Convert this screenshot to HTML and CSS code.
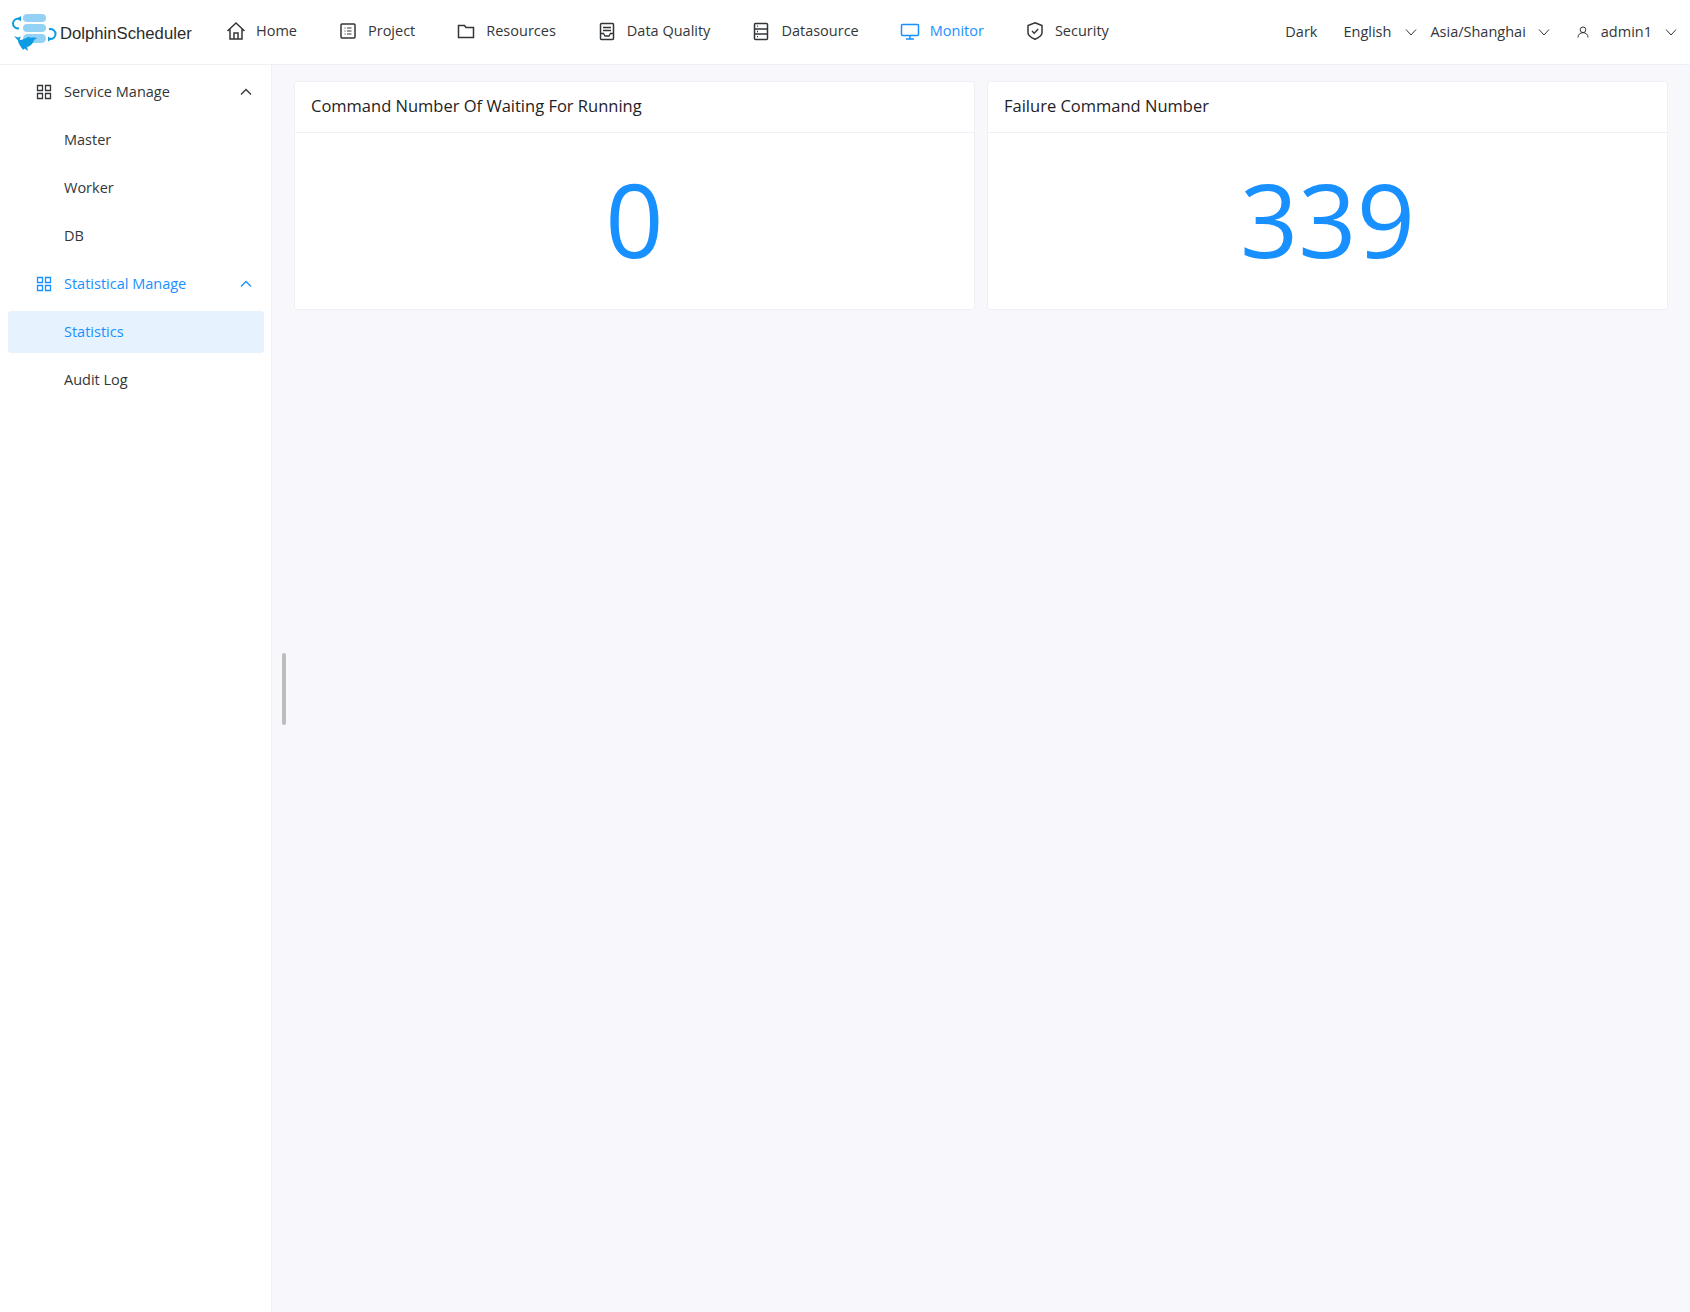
FILE: index.html
```html
<!DOCTYPE html>
<html lang="en">
<head>
<meta charset="utf-8">
<title>DolphinScheduler</title>
<link rel="stylesheet" href="styles.css">
</head>
<body>
<header class="topbar">
  <div class="logo">
    <svg class="logo-mark" width="60" height="64" viewBox="0 0 60 64">
      <rect x="23" y="14" width="23" height="8" rx="4" fill="#93d2f4"/>
      <rect x="23" y="24" width="23" height="8" rx="4" fill="#93d2f4"/>
      <rect x="23" y="34" width="23" height="9" rx="4.5" fill="#93d2f4"/>
      <path d="M20 18.5 C15 18 13 21 13 23.5 C13 26 15 28.5 19 28.5" fill="none" stroke="#0d9be3" stroke-width="2"/>
      <path d="M21 16 L17 18.700 L21 21.200 Z" fill="#0d9be3"/>
      <path d="M49 29 C53 28.500 55.500 31 55.500 34 C55.500 37 53 39 50 39" fill="none" stroke="#0d9be3" stroke-width="2"/>
      <path d="M48 36.500 L52 39 L48 41.500 Z" fill="#0d9be3"/>
      <path d="M14 36 L18 37.500 L21 36.500 L19.500 39.500 C21 40.500 23 39.500 26 38 L29 36.500 L29.500 37.800 C32 37.500 34 37.500 37 38 L34 40 C33 44 30 46.500 27 47 L28 51 L24.500 48.500 L23 50 C21 47 18 43 18 40.500 Z" fill="#0d9be3"/>
    </svg>
    <span class="logo-text">DolphinScheduler</span>
  </div>
  <nav class="menu">
    <a class="menu-item"><svg class="icon" viewBox="0 0 20 20"><path d="M1.500 10 10 2l8.500 8M4 8v10h12V8M8 18v-6h4v6" fill="none" stroke="#333639" stroke-width="1.500"/></svg><span>Home</span></a>
    <a class="menu-item"><svg class="icon" viewBox="0 0 20 20"><rect x="3" y="3" width="14" height="14" rx="1" fill="none" stroke="#333639" stroke-width="1.500"/><path d="M6.500 7h1M6.500 10h1M6.500 13h1M9 7h4.500M9 10h4.500M9 13h4.500" stroke="#333639" stroke-width="1.200"/></svg><span>Project</span></a>
    <a class="menu-item"><svg class="icon" viewBox="0 0 20 20"><path d="M2.500 4.500h6l1.500 2h7.500v10h-15z" fill="none" stroke="#333639" stroke-width="1.500"/></svg><span>Resources</span></a>
    <a class="menu-item"><svg class="icon" viewBox="0 0 20 20"><rect x="3.500" y="2.500" width="13" height="16" rx="1" fill="none" stroke="#333639" stroke-width="1.500"/><path d="M6 6.500h8M6 9.500h8M3.500 12.500h3l1.500 2.500h4l1.500-2.500h3" fill="none" stroke="#333639" stroke-width="1.300"/></svg><span>Data Quality</span></a>
    <a class="menu-item"><svg class="icon" viewBox="0 0 20 20"><rect x="3.500" y="2.500" width="13" height="16" rx="1" fill="none" stroke="#333639" stroke-width="1.500"/><path d="M3.500 8h13M3.500 13h13M6 5.200h1M6 10.500h1M6 15.700h1" stroke="#333639" stroke-width="1.300"/></svg><span>Datasource</span></a>
    <a class="menu-item is-active"><svg class="icon" viewBox="0 0 20 20"><rect x="1.500" y="3.500" width="17" height="11" rx="1" fill="none" stroke="#1890ff" stroke-width="1.500"/><path d="M10 15v3M6 18h8" stroke="#1890ff" stroke-width="1.500"/></svg><span>Monitor</span></a>
    <a class="menu-item"><svg class="icon" viewBox="0 0 20 20"><path d="M10 1.800 17 4.500v7.200c0 2.800-3.500 5-7 6.600-3.500-1.600-7-3.800-7-6.600V4.500z" fill="none" stroke="#333639" stroke-width="1.500"/><path d="M7 10l2.200 2.200L13.200 8" fill="none" stroke="#333639" stroke-width="1.400"/></svg><span>Security</span></a>
  </nav>
  <div class="settings">
    <span class="set-dark">Dark</span>
    <span class="set-lang">English</span>
    <svg class="chev chev-lang" viewBox="0 0 12 12"><path d="M1 3.500 6 9l5-5.500" fill="none" stroke="#333639" stroke-width="1"/></svg>
    <span class="set-tz">Asia/Shanghai</span>
    <svg class="chev chev-tz" viewBox="0 0 12 12"><path d="M1 3.500 6 9l5-5.500" fill="none" stroke="#333639" stroke-width="1"/></svg>
    <svg class="user-icon" viewBox="0 0 12 12"><circle cx="6" cy="3.800" r="2.800" fill="none" stroke="#333639" stroke-width="1"/><path d="M1 11.500c0-3 2-4.800 5-4.800s5 1.800 5 4.800" fill="none" stroke="#333639" stroke-width="1"/></svg>
    <span class="set-user">admin1</span>
    <svg class="chev chev-user" viewBox="0 0 12 12"><path d="M1 3.500 6 9l5-5.500" fill="none" stroke="#333639" stroke-width="1"/></svg>
  </div>
</header>
<div class="body">
  <aside class="sidebar">
    <div class="side-row side-group">
      <svg class="grid-icon" viewBox="0 0 16 16"><path d="M1.500 1.500h5v5h-5zM9.500 1.500h5v5h-5zM1.500 9.500h5v5h-5zM9.500 9.500h5v5h-5z" fill="none" stroke="#333639" stroke-width="1.300"/></svg>
      <span class="side-label">Service Manage</span>
      <svg class="up" viewBox="0 0 12 12"><path d="M1 8.500 6 3.500l5 5" fill="none" stroke="#333639" stroke-width="1.300"/></svg>
    </div>
    <div class="side-row side-sub">Master</div>
    <div class="side-row side-sub">Worker</div>
    <div class="side-row side-sub">DB</div>
    <div class="side-row side-group is-open">
      <svg class="grid-icon" viewBox="0 0 16 16"><path d="M1.500 1.500h5v5h-5zM9.500 1.500h5v5h-5zM1.500 9.500h5v5h-5zM9.500 9.500h5v5h-5z" fill="none" stroke="#1890ff" stroke-width="1.300"/></svg>
      <span class="side-label">Statistical Manage</span>
      <svg class="up" viewBox="0 0 12 12"><path d="M1 8.500 6 3.500l5 5" fill="none" stroke="#1890ff" stroke-width="1.300"/></svg>
    </div>
    <div class="side-row side-sub is-selected">Statistics</div>
    <div class="side-row side-sub">Audit Log</div>
  </aside>
  <main class="content">
    <div class="scroll-thumb"></div>
    <section class="card">
      <h2 class="card-title">Command Number Of Waiting For Running</h2>
      <div class="card-value"><span class="digits">0</span></div>
    </section>
    <section class="card">
      <h2 class="card-title">Failure Command Number</h2>
      <div class="card-value"><span class="digits">339</span></div>
    </section>
  </main>
</div>
</body>
</html>
```
FILE: styles.css
```css
* { box-sizing: border-box; }
html, body { margin: 0; height: 100%; }
body {
  display: flex;
  flex-direction: column;
  height: 1312px;
  overflow: hidden;
  background: #fff;
  color: #333639;
  font-family: "Open Sans", "Noto Sans", sans-serif;
  font-size: 14.5px;
}
.topbar {
  display: flex;
  align-items: center;
  height: 65px;
  flex: none;
  border-bottom: 1px solid #efeff5;
  background: #fff;
}
.logo { display: flex; align-items: center; width: 226px; flex: none; }
.logo-mark { flex: none; display: block; }
.logo-text {
  font-family: "Liberation Sans", Arial, sans-serif;
  font-size: 16.7px;
  color: #2b2b2b;
  position: relative;
  top: 2px;
}
.menu { display: flex; gap: 41px; flex: none; height: 100%; align-items: center; position: relative; top: -2px; }
.menu-item { display: flex; align-items: center; gap: 10px; }
.menu-item .icon { position: relative; top: 1px; }
.menu-item.is-active { color: #1890ff; }
.icon { width: 20px; height: 20px; flex: none; }
.settings { margin-left: auto; display: flex; align-items: center; padding-right: 13px; position: relative; top: -1px; }
.set-dark { margin-right: 26px; }
.chev { width: 12px; height: 12px; flex: none; position: relative; top: 1px; }
.chev-lang { margin: 0 13px 0 14px; }
.chev-tz { margin: 0 27px 0 12px; }
.user-icon { width: 12px; height: 12px; margin-right: 12px; flex: none; position: relative; top: 1px; }
.chev-user { margin-left: 13px; }
.body { flex: 1; display: flex; min-height: 0; }
.sidebar {
  width: 272px;
  flex: none;
  background: #fff;
  border-right: 1px solid #efeff5;
  padding: 6px 0 0 8px;
}
.side-row {
  display: flex;
  align-items: center;
  width: 256px;
  height: 42px;
  margin-bottom: 6px;
  border-radius: 3px;
}
.side-group { padding: 0 12px 0 28px; }
.grid-icon { width: 16px; height: 16px; flex: none; margin-right: 12px; }
.side-label { flex: 1; padding-bottom: 2px; }
.up { width: 12px; height: 12px; flex: none; }
.side-sub { padding: 0 0 2px 56px; }
.is-open { color: #1890ff; }
.is-selected { background: #e6f3ff; color: #1890ff; }
.content {
  flex: 1;
  position: relative;
  display: flex;
  align-items: flex-start;
  gap: 12px;
  padding: 16px 22px;
  background: #f7f7fc;
}
.scroll-thumb {
  position: absolute;
  left: 10px;
  top: 588px;
  width: 4px;
  height: 72px;
  border-radius: 2px;
  background: #bdbdbd;
}
.card {
  flex: 1;
  height: 229px;
  background: #fff;
  border: 1px solid #efeff5;
  border-radius: 3px;
}
.card-title {
  margin: 0;
  height: 51px;
  padding: 0 16px 4px;
  display: flex;
  align-items: center;
  border-bottom: 1px solid #efeff5;
  font-size: 16.5px;
  font-weight: 400;
  color: #1f2225;
}
.card-value {
  height: 176px;
  display: flex;
  align-items: center;
  justify-content: center;
  font-size: 102px;
  color: #1890ff;
  line-height: 1;
}
.digits { display: block; transform: translateY(-2px); }
```
